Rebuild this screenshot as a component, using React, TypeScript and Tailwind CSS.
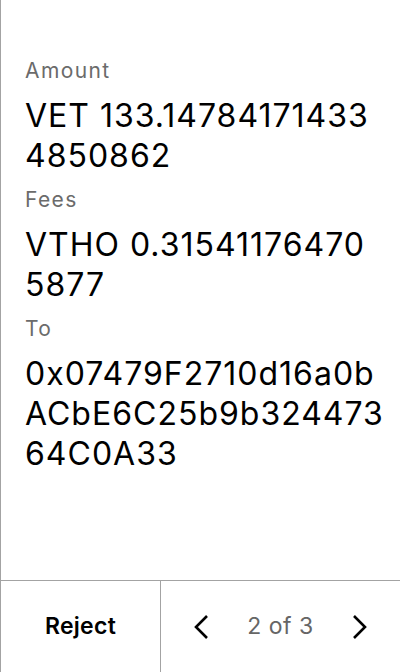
import React from "react";

const rows = [
  { label: "Amount", lines: ["VET 133.14784171433", "4850862"] },
  { label: "Fees", lines: ["VTHO 0.31541176470", "5877"] },
  { label: "To", lines: ["0x07479F2710d16a0b", "ACbE6C25b9b324473", "64C0A33"] },
];

function ChevronLeft() {
  return (
    <svg width="16" height="26" viewBox="0 0 16 26" fill="none">
      <path d="M14 2 L3 13 L14 24" stroke="#000" strokeWidth="2.6" />
    </svg>
  );
}

function ChevronRight() {
  return (
    <svg width="16" height="26" viewBox="0 0 16 26" fill="none">
      <path d="M2 2 L13 13 L2 24" stroke="#000" strokeWidth="2.6" />
    </svg>
  );
}

export default function App() {
  return (
    <div
      className="w-[400px] h-[672px] flex flex-col bg-white border-l border-[#a3a3a3]"
      style={{ fontFamily: "Inter, 'Noto Sans', sans-serif" }}
    >
      <div className="flex-1 px-6 pt-[56px]">
        {rows.map((row) => (
          <div key={row.label} className="mb-[9px]">
            <div className="text-[21px] leading-[30px] tracking-[1.4px] text-[#6b6b6b]">
              {row.label}
            </div>
            <div className="mt-[10px] text-[32px] leading-[40px] tracking-[1px] text-black whitespace-nowrap">
              {row.lines.map((line) => (
                <div key={line}>{line}</div>
              ))}
            </div>
          </div>
        ))}
      </div>

      <div className="h-[92px] flex border-t border-[#a3a3a3]">
        <button className="w-[160px] border-r border-[#a3a3a3] text-[23px] tracking-[0.3px] font-semibold text-black">
          Reject
        </button>
        <div className="flex-1 flex items-center justify-between px-[32px]">
          <ChevronLeft />
          <span className="text-[23px] tracking-[0.5px] text-[#666]">2 of 3</span>
          <ChevronRight />
        </div>
      </div>
    </div>
  );
}
